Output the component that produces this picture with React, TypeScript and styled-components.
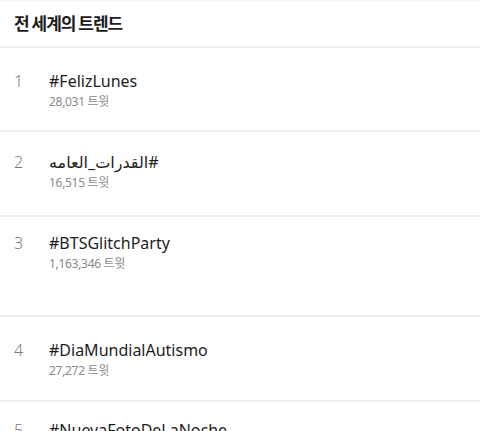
import React from "react";
import styled, { createGlobalStyle } from "styled-components";

const Global = createGlobalStyle`
  html, body { margin: 0; padding: 0; background: #ffffff; }
  body {
    font-family: "Noto Sans", "Noto Sans CJK KR", "DejaVu Sans", sans-serif;
    -webkit-font-smoothing: antialiased;
  }
`;

const Page = styled.div`
  width: 480px;
  height: 431px;
  overflow: hidden;
  background: #fff;
  border-top: 1px solid #f6f6f6;
  box-sizing: border-box;
`;

const Header = styled.header`
  height: 47px;
  display: flex;
  align-items: center;
  padding: 0 14px 2px;
  box-sizing: border-box;
  border-bottom: 2px solid #ececec;
`;

const HeaderTitle = styled.h1`
  margin: 0;
  font-family: "Noto Sans CJK KR", "Noto Sans", sans-serif;
  font-size: 17px;
  font-weight: 700;
  letter-spacing: -1px;
  color: #1c1c1c;
`;

const List = styled.ol`
  list-style: none;
  margin: 0;
  padding: 0;
`;

const Row = styled.li<{ $pad: number; $h: number }>`
  display: grid;
  grid-template-columns: 35px 1fr;
  align-content: start;
  padding: ${(p) => p.$pad}px 14px 0;
  height: ${(p) => p.$h}px;
  box-sizing: border-box;
  border-bottom: 2px solid #ececec;
`;

const Rank = styled.span`
  font-size: 16px;
  line-height: 20px;
  color: #7a7a7a;
  font-weight: 300;
`;

const Info = styled.div`
  display: flex;
  flex-direction: column;
  align-items: flex-start;
  gap: 3px;
`;

const Title = styled.span`
  font-size: 16px;
  line-height: 20px;
  color: #1d1d1d;
  white-space: nowrap;
`;

const Count = styled.span`
  font-family: "Noto Sans", "Noto Sans CJK KR", sans-serif;
  font-size: 12px;
  line-height: 16px;
  color: #8a8a8a;
  letter-spacing: -0.3px;
`;

const trends = [
  { rank: 1, title: "#FelizLunes", count: "28,031", pad: 23, h: 84 },
  { rank: 2, title: "#القدرات_العامه", count: "16,515", pad: 20, h: 85 },
  { rank: 3, title: "#BTSGlitchParty", count: "1,163,346", pad: 16, h: 100 },
  { rank: 4, title: "#DiaMundialAutismo", count: "27,272", pad: 23, h: 85 },
  { rank: 5, title: "#NuevaFotoDeLaNoche", count: "12,480", pad: 18, h: 85 },
];

export default function App() {
  return (
    <>
      <Global />
      <Page>
        <Header>
          <HeaderTitle>전 세계의 트렌드</HeaderTitle>
        </Header>
        <List>
          {trends.map((t) => (
            <Row key={t.rank} $pad={t.pad} $h={t.h}>
              <Rank>{t.rank}</Rank>
              <Info>
                <Title dir="auto">{t.title}</Title>
                <Count>{t.count} 트윗</Count>
              </Info>
            </Row>
          ))}
        </List>
      </Page>
    </>
  );
}
